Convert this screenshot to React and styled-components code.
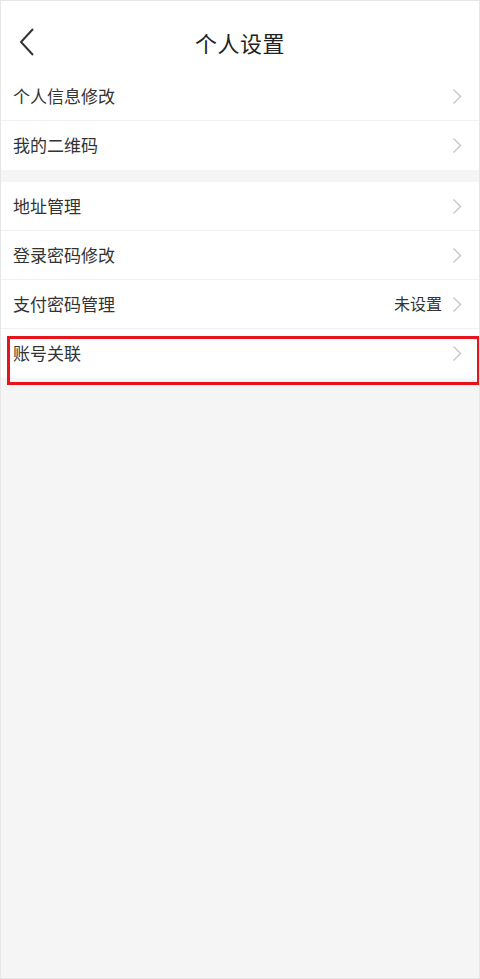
import React from "react";
import styled, { createGlobalStyle } from "styled-components";

const Global = createGlobalStyle`
  html, body { margin: 0; padding: 0; }
  body { font-family: "Noto Sans CJK SC", "Noto Sans", sans-serif; background: #f5f5f5; }
  * { box-sizing: border-box; }
`;

const Page = styled.div`
  width: 480px;
  height: 979px;
  border: 1px solid #e6e6e6;
  background: #f5f5f5;
  display: flex;
  flex-direction: column;
  overflow: hidden;
`;

const Header = styled.header`
  height: 71px;
  padding-top: 10px;
  background: #fff;
  display: grid;
  grid-template-columns: 60px 1fr 60px;
  align-items: center;
`;

const Back = styled.button`
  border: 0;
  background: none;
  padding: 0 0 0 17px;
  height: 100%;
  display: flex;
  align-items: center;
  cursor: pointer;
`;

const Title = styled.h1`
  margin: 0;
  text-align: center;
  font-size: 22px;
  font-weight: 400;
  color: #222;
  letter-spacing: 0.5px;
`;

const Group = styled.section`
  background: #fff;
  margin-top: ${(p) => p.$gap || 0}px;
`;

const RowWrap = styled.div`
  position: relative;
`;

const Row = styled.div`
  height: 49px;
  display: flex;
  align-items: center;
  padding: 0 17px 0 12px;
  border-bottom: ${(p) => (p.$last ? "0" : "1px solid #f1f1f1")};
`;

const Label = styled.span`
  flex: 1;
  font-size: 17px;
  color: #333;
  transform: translateY(-1px);
`;

const Value = styled.span`
  font-size: 16px;
  color: #333;
  margin-right: 10px;
  transform: translateY(-1px);
`;

const Highlight = styled.div`
  position: absolute;
  top: 7px;
  left: 6px;
  right: -1px;
  height: 49px;
  border: 3px solid #e8141b;
  pointer-events: none;
`;

const Chevron = () => (
  <svg width="10" height="17" viewBox="0 0 10 17">
    <polyline points="1.5,1.5 8.5,8.5 1.5,15.5" fill="none" stroke="#c6c6c6" strokeWidth="1.4" />
  </svg>
);

const Item = ({ label, value, last, highlight }) => (
  <RowWrap>
    <Row $last={last}>
      <Label>{label}</Label>
      {value && <Value>{value}</Value>}
      <Chevron />
    </Row>
    {highlight && <Highlight />}
  </RowWrap>
);

export default function App() {
  return (
    <>
      <Global />
      <Page>
        <Header>
          <Back aria-label="返回">
            <svg width="18" height="30" viewBox="0 0 18 30">
              <polyline points="15,2 3,15 15,28" fill="none" stroke="#333" strokeWidth="2" />
            </svg>
          </Back>
          <Title>个人设置</Title>
          <span />
        </Header>
        <Group>
          <Item label="个人信息修改" />
          <Item label="我的二维码" last />
        </Group>
        <Group $gap={12}>
          <Item label="地址管理" />
          <Item label="登录密码修改" />
          <Item label="支付密码管理" value="未设置" />
          <Item label="账号关联" last highlight />
        </Group>
      </Page>
    </>
  );
}
